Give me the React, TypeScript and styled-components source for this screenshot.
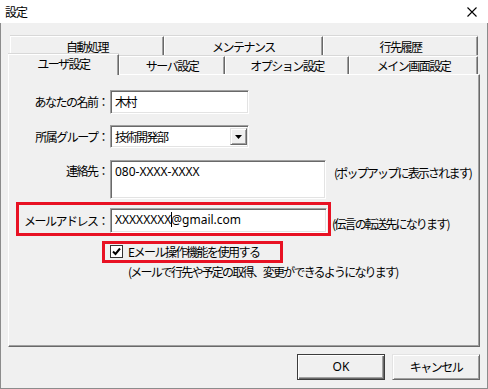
import React from "react";
import styled, { createGlobalStyle } from "styled-components";

const Global = createGlobalStyle`
  html, body { margin: 0; padding: 0; background: #f0f0f0; }
  * { box-sizing: border-box; }
`;

const cjk = `"Noto Sans CJK JP", "Noto Sans", sans-serif`;
const latin = `"Noto Sans", "Noto Sans CJK JP", sans-serif`;

const Window = styled.div`
  width: 488px;
  height: 389px;
  display: flex;
  flex-direction: column;
  font-family: ${cjk};
  font-size: 12px;
  color: #000;
`;

const TitleBar = styled.div`
  height: 23px;
  background: #fff;
  display: flex;
  align-items: center;
  justify-content: space-between;
  padding: 0 11px 0 5px;
`;

const Title = styled.span`
  font-size: 12px;
  letter-spacing: -1px;
  line-height: 16px;
`;

const Body = styled.div`
  flex: 1;
  background: #f0f0f0;
  border: 1px solid #8c8c8c;
  border-top: none;
  padding: 13px 7px 8px 7px;
  display: flex;
  flex-direction: column;
`;

const Tabs = styled.div`
  display: flex;
  flex-direction: column;
  height: 38px;
`;

const TabRow = styled.div<{ $front?: boolean }>`
  display: flex;
  align-items: flex-end;
  height: ${(p) => (p.$front ? 21 : 20)}px;
  margin-bottom: ${(p) => (p.$front ? -1 : -2)}px;
  padding-left: ${(p) => (p.$front ? 0 : 2)}px;
  position: relative;
  z-index: ${(p) => (p.$front ? 2 : 1)};
`;

const Tab = styled.div<{ $w: number; $selected?: boolean; $back?: boolean }>`
  width: ${(p) => p.$w}px;
  height: ${(p) => (p.$selected ? 21 : p.$back ? 20 : 18)}px;
  margin-bottom: ${(p) => (p.$selected || p.$back ? 0 : 1)}px;
  background: #f0f0f0;
  border-top: 1px solid #fff;
  border-left: 1px solid #fff;
  border-right: 1px solid #696969;
  box-shadow: inset -1px 0 0 #a0a0a0, 0 -1px 0 #d8d8d8;
  display: flex;
  align-items: center;
  justify-content: center;
  padding-bottom: ${(p) => (p.$selected ? 2 : 0)}px;
  letter-spacing: -1.5px;
  line-height: 16px;
  white-space: nowrap;
`;

const Panel = styled.div`
  height: 273px;
  background: #f0f0f0;
  border-top: 1px solid #fff;
  border-left: 1px solid #fff;
  border-right: 1px solid #696969;
  border-bottom: 1px solid #696969;
  box-shadow: inset -1px -1px 0 #a0a0a0;
  padding-top: 15px;
  display: flex;
  flex-direction: column;
`;

const Row = styled.div<{ $mt?: number; $top?: boolean }>`
  display: flex;
  align-items: ${(p) => (p.$top ? "flex-start" : "center")};
  margin-top: ${(p) => p.$mt ?? 0}px;
`;

const Label = styled.div<{ $w: number; $pt?: number }>`
  width: ${(p) => p.$w}px;
  margin-right: 2px;
  text-align: right;
  letter-spacing: -1.5px;
  line-height: 16px;
  white-space: nowrap;
  padding-top: ${(p) => p.$pt ?? 0}px;
`;

const Field = styled.div<{ $w: number; $h: number }>`
  width: ${(p) => p.$w}px;
  height: ${(p) => p.$h}px;
  background: #fff;
  border-top: 1px solid #a0a0a0;
  border-left: 1px solid #a0a0a0;
  border-right: 1px solid #fff;
  border-bottom: 1px solid #fff;
  box-shadow: inset 1px 1px 0 #696969, inset -1px -1px 0 #e3e3e3;
  padding: 3px 4px 0 4px;
  line-height: 16px;
  white-space: nowrap;
  display: flex;
  align-items: flex-start;
  justify-content: space-between;
`;

const CjkText = styled.span`
  font-family: ${cjk};
  letter-spacing: -1.5px;
`;

const LatinText = styled.span`
  font-family: ${latin};
  font-size: 12px;
`;

const Caret = styled.span`
  display: inline-block;
  width: 1px;
  height: 15px;
  background: #000;
  vertical-align: -3px;
  margin-right: -1px;
`;

const DropButton = styled.div`
  width: 17px;
  height: 17px;
  margin-top: -1px;
  margin-right: -3px;
  background: #f0f0f0;
  border-top: 1px solid #e3e3e3;
  border-left: 1px solid #e3e3e3;
  border-right: 1px solid #696969;
  border-bottom: 1px solid #696969;
  box-shadow: inset 1px 1px 0 #fff, inset -1px -1px 0 #a0a0a0;
  display: flex;
  align-items: center;
  justify-content: center;
`;

const Hint = styled.div<{ $ml: number; $mt?: number }>`
  margin-left: ${(p) => p.$ml}px;
  margin-top: ${(p) => p.$mt ?? 0}px;
  letter-spacing: -1.8px;
  line-height: 16px;
  white-space: nowrap;
`;

const RedBox = styled.div<{ $ml: number; $w?: number; $pad: string }>`
  display: flex;
  align-items: flex-start;
  margin-left: ${(p) => p.$ml}px;
  ${(p) => (p.$w ? `width: ${p.$w}px;` : "")}
  border: 3px solid #e81123;
  padding: ${(p) => p.$pad};
`;

const CheckBox = styled.div`
  width: 13px;
  height: 13px;
  background: #fff;
  border: 1px solid #333;
  display: flex;
  align-items: center;
  justify-content: center;
  margin-top: 1px;
`;

const CheckLabel = styled.div`
  margin-left: 5px;
  letter-spacing: -1.5px;
  line-height: 16px;
  white-space: nowrap;
`;

const Note = styled.div`
  margin-left: 119px;
  margin-top: 1px;
  letter-spacing: -1.8px;
  line-height: 16px;
  white-space: nowrap;
`;

const ButtonRow = styled.div`
  display: flex;
  justify-content: flex-end;
  gap: 7px;
  margin-top: 7px;
`;

const Button = styled.div<{ $default?: boolean }>`
  width: 88px;
  height: 26px;
  background: #f0f0f0;
  display: flex;
  align-items: center;
  justify-content: center;
  line-height: 16px;
  border: 1px solid ${(p) => (p.$default ? "#3c3c3c" : "#a0a0a0")};
  ${(p) =>
    p.$default
      ? "box-shadow: inset 1px 1px 0 #fff, inset -1px -1px 0 #696969, inset -2px -2px 0 #a0a0a0;"
      : "border-top-color: #e3e3e3; border-left-color: #e3e3e3; border-right-color: #696969; border-bottom-color: #696969; box-shadow: inset 1px 1px 0 #fff, inset -1px -1px 0 #a0a0a0;"}
`;

const backTabs = [
  { label: "自動処理", w: 154 },
  { label: "メンテナンス", w: 159 },
  { label: "行先履歴", w: 155 },
];

const frontTabs = [
  { label: "ユーザ設定", w: 111, selected: true },
  { label: "サーバ設定", w: 106 },
  { label: "オプション設定", w: 124 },
  { label: "メイン画面設定", w: 129 },
];

export default function App() {
  return (
    <>
      <Global />
      <Window>
        <TitleBar>
          <Title>設定</Title>
          <svg width="10" height="10" viewBox="0 0 10 10">
            <path d="M0.5 0.5 L9.5 9.5 M9.5 0.5 L0.5 9.5" stroke="#000" strokeWidth="1.1" fill="none" />
          </svg>
        </TitleBar>
        <Body>
          <Tabs>
            <TabRow>
              {backTabs.map((t) => (
                <Tab key={t.label} $w={t.w} $back>
                  {t.label}
                </Tab>
              ))}
            </TabRow>
            <TabRow $front>
              {frontTabs.map((t) => (
                <Tab key={t.label} $w={t.w} $selected={t.selected}>
                  {t.label}
                </Tab>
              ))}
            </TabRow>
          </Tabs>
          <Panel>
            <Row>
              <Label $w={99}>あなたの名前：</Label>
              <Field $w={139} $h={24}>
                <CjkText>木村</CjkText>
              </Field>
            </Row>
            <Row $mt={11}>
              <Label $w={99}>所属グループ：</Label>
              <Field $w={139} $h={23}>
                <CjkText>技術開発部</CjkText>
                <DropButton>
                  <svg width="7" height="4" viewBox="0 0 7 4">
                    <path d="M0 0 H7 L3.5 4 Z" fill="#000" />
                  </svg>
                </DropButton>
              </Field>
            </Row>
            <Row $mt={12} $top>
              <Label $w={99} $pt={3}>連絡先：</Label>
              <Field $w={216} $h={39}>
                <LatinText>080-XXXX-XXXX</LatinText>
              </Field>
              <Hint $ml={8} $mt={5}>(ポップアップに表示されます)</Hint>
            </Row>
            <Row $mt={3} $top>
              <RedBox $ml={7} $pad="3px 1px 0 0">
                <Label $w={89} $pt={5}>メールアドレス：</Label>
                <Field $w={217} $h={25}>
                  <LatinText>
                    XXXXXXXX
                    <Caret />
                    @gmail.com
                  </LatinText>
                </Field>
              </RedBox>
              <Hint $ml={1} $mt={14}>(伝言の転送先になります)</Hint>
            </Row>
            <Row $mt={5}>
              <RedBox $ml={93} $w={181} $pad="0 0 0 5px">
                <CheckBox>
                  <svg width="9" height="9" viewBox="0 0 9 9">
                    <path d="M1 4.5 L3.5 7 L8 1.5" stroke="#000" strokeWidth="2" fill="none" />
                  </svg>
                </CheckBox>
                <CheckLabel>Eメール操作機能を使用する</CheckLabel>
              </RedBox>
            </Row>
            <Note>(メールで行先や予定の取得、変更ができるようになります)</Note>
          </Panel>
          <ButtonRow>
            <Button $default>
              <LatinText>OK</LatinText>
            </Button>
            <Button>
              <CjkText>キャンセル</CjkText>
            </Button>
          </ButtonRow>
        </Body>
      </Window>
    </>
  );
}
